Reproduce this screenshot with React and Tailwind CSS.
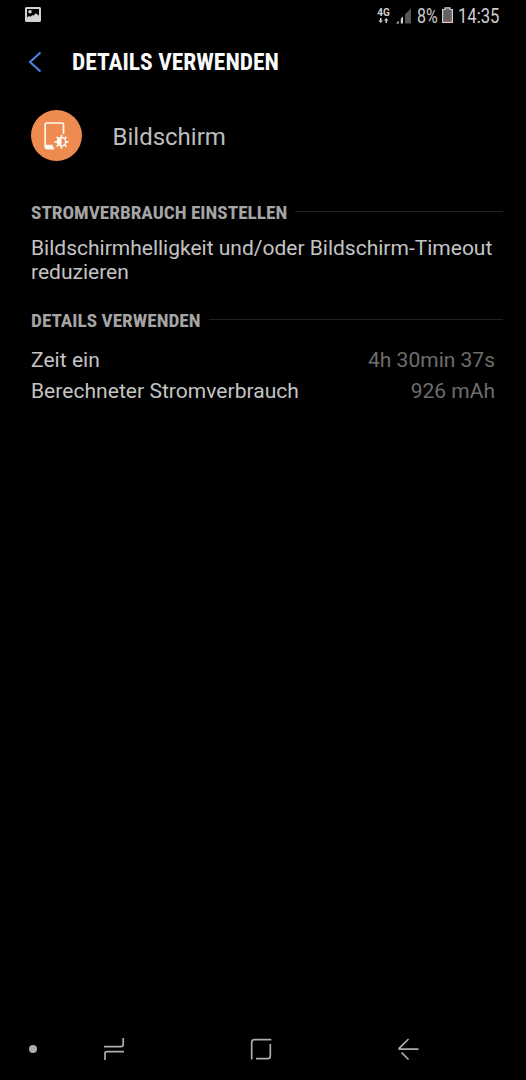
function StatusBar() {
  return (
    <header className="flex h-8 items-center justify-between pl-[25px] pr-[27px] text-[#cfcfcf]">
      <svg className="mb-[3px] h-[15px] w-4" viewBox="0 0 16 15">
        <path fill="#d2d2d2" fillRule="evenodd" d="M1.500 0h13Q16 0 16 1.500v12Q16 15 14.500 15h-13Q0 15 0 13.500v-12Q0 0 1.500 0ZM2 2v8.500l2-1.500 1.500.8L7.500 8l1 .8 2-2.500L14 8.500V2Z" />
        <circle cx="5" cy="4.800" r="1.800" fill="#d2d2d2" />
      </svg>
      <div className="flex h-full items-center">
        <div className="mr-[6px] mb-px flex w-[13px] flex-col items-center">
          <span className="text-[10px] leading-[9px] font-bold">4G</span>
          <svg className="mt-px h-[5px] w-[11px]" viewBox="0 0 11 5">
            <path fill="#cfcfcf" d="M2 0h1.500v2.500H5L2.750 5 .5 2.500H2ZM7.500 5H9V2.500h1.500L8.250 0 6 2.500h1.500Z" />
          </svg>
        </div>
        <svg className="mr-[6px] mb-px h-4 w-[15px]" viewBox="0 0 15 16">
          <path fill="#d0d0d0" d="M0 15.500 2.700 12.700v2.800ZM4.800 15.500V10.600L7 8.400v7.100Z" />
          <path fill="#555" d="M9 15.500V6.200L15 .5v15Z" />
        </svg>
        <span className="block w-[21px] text-[20px]"><span className="block origin-left scale-x-[0.8]">8%</span></span>
        <svg className="mr-[5px] mb-[2px] ml-[4px] h-4 w-[11px]" viewBox="0 0 11 16">
          <path fill="#626262" stroke="#cfcfcf" strokeWidth="1.200" d="M.6 2.500h2.400V.8h5v1.700h2.400v12.900H.6Z" />
          <path fill="#b65c52" d="M1.200 13.900h8.600v1H1.200Z" />
        </svg>
        <span className="block w-[41px] text-[20px]"><span className="block origin-left scale-x-[0.83]">14:35</span></span>
      </div>
    </header>
  )
}

function SectionTitle({ children }) {
  return (
    <div className="flex h-6 items-center pr-[23px]">
      <h2 className="relative top-px font-[Roboto_Condensed,Roboto,sans-serif] text-[19.250px] leading-6 font-bold whitespace-nowrap text-[#a5a5a5]">{children}</h2>
      <div className="mb-0.5 ml-2 h-px flex-1 bg-[#1f1f1f]" />
    </div>
  )
}

function DetailRow({ label, value }) {
  return (
    <div className="flex h-[31px] items-center justify-between pr-[31px] text-[21px]">
      <span className="tracking-[0.04px] text-[#c4c4c4]">{label}</span>
      <span className="text-[#6d6d6d]">{value}</span>
    </div>
  )
}

function BrightnessIcon() {
  return (
    <div className="flex size-[51px] items-center justify-center rounded-full bg-[#ee8b50]">
      <svg className="size-[51px]" viewBox="0 0 51 51" fill="none">
        <path stroke="#fff7ef" strokeWidth="1.700" d="M32.500 24V14.500Q32.500 13 31 13H15.700Q14.200 13 14.200 14.500V37Q14.200 38.500 15.700 38.500H23" />
        <path fill="#fff7ef" d="M14 34.800h7.200l2.300 4.500H15.500Q14 39.300 14 38Z" />
        <circle cx="30.500" cy="31.800" r="4.200" stroke="#fff7ef" strokeWidth="1.500" />
        <path fill="#fff7ef" d="M30.500 27.600a4.200 4.200 0 0 0 0 8.400Z" />
        <path stroke="#fff7ef" strokeWidth="1.700" d="M30.500 24.800v2.500M30.500 36.300v2.500M23.500 31.800h2.500M35 31.800h2.500M25.600 26.900l1.700 1.700M33.700 35l1.700 1.700M25.600 36.700l1.700-1.700M33.700 28.600l1.700-1.700" />
      </svg>
    </div>
  )
}

function NavBar() {
  return (
    <nav className="mt-auto mb-[19px] flex h-6 items-center pl-[29px]">
      <div className="size-2 rounded-full bg-[#adadad]" />
      <svg className="ml-[66px] h-6 w-[22px]" viewBox="0 0 22 24" fill="none" stroke="#adadad" strokeWidth="1.700">
        <path d="M20.200 1v6.500Q20.200 9.700 18 9.700H1M2 23v-6.500Q2 14.700 4 14.700h17" />
      </svg>
      <svg className="ml-[125px] h-6 w-[22px]" viewBox="0 0 22 24" fill="none" stroke="#adadad" strokeWidth="1.700">
        <path d="M1.700 22.500V5.500Q1.700 2.700 4.500 2.700H21.300M20.300 7v12Q20.300 21.700 17.500 21.700H6" />
      </svg>
      <svg className="ml-[126px] h-6 w-[22px]" viewBox="0 0 22 24" fill="none" stroke="#adadad" strokeWidth="1.700">
        <path d="M10.500 2 1.200 11.300Q.8 12.200 1.800 12.200H20.500M3.500 15.500l7 7" />
      </svg>
    </nav>
  )
}

export default function App() {
  return (
    <div className="flex h-[1080px] w-[526px] flex-col bg-black font-[Roboto,sans-serif]">
      <StatusBar />
      <div className="flex h-[60px] items-center pl-[28px]">
        <svg className="h-[22px] w-[14px]" viewBox="0 0 14 22" fill="none" stroke="#4a8ae6" strokeWidth="2">
          <path d="M12.500 1.500 2 11l10.500 9.500" />
        </svg>
        <h1 className="mt-[2px] ml-[30px] font-[Roboto_Condensed,Roboto,sans-serif] text-[23.500px] font-bold whitespace-nowrap text-[#fafafa]">DETAILS VERWENDEN</h1>
      </div>
      <div className="mt-[18px] flex items-center pl-[31px]">
        <BrightnessIcon />
        <span className="mt-[2px] ml-[30.500px] text-[24px] text-[#bdbdbd]">Bildschirm</span>
      </div>
      <main className="flex flex-col pl-[31px]">
        <section className="mt-[39px]">
          <SectionTitle>STROMVERBRAUCH EINSTELLEN</SectionTitle>
          <p className="mt-3 text-[21px] leading-6 whitespace-nowrap text-[#c4c4c4]">
            Bildschirmhelligkeit und/oder Bildschirm-Timeout
            <br />
            reduzieren
          </p>
        </section>
        <section className="mt-6">
          <SectionTitle>DETAILS VERWENDEN</SectionTitle>
          <div className="mt-[13.500px]">
            <DetailRow label="Zeit ein" value="4h 30min 37s" />
            <DetailRow label="Berechneter Stromverbrauch" value="926 mAh" />
          </div>
        </section>
      </main>
      <NavBar />
    </div>
  )
}
